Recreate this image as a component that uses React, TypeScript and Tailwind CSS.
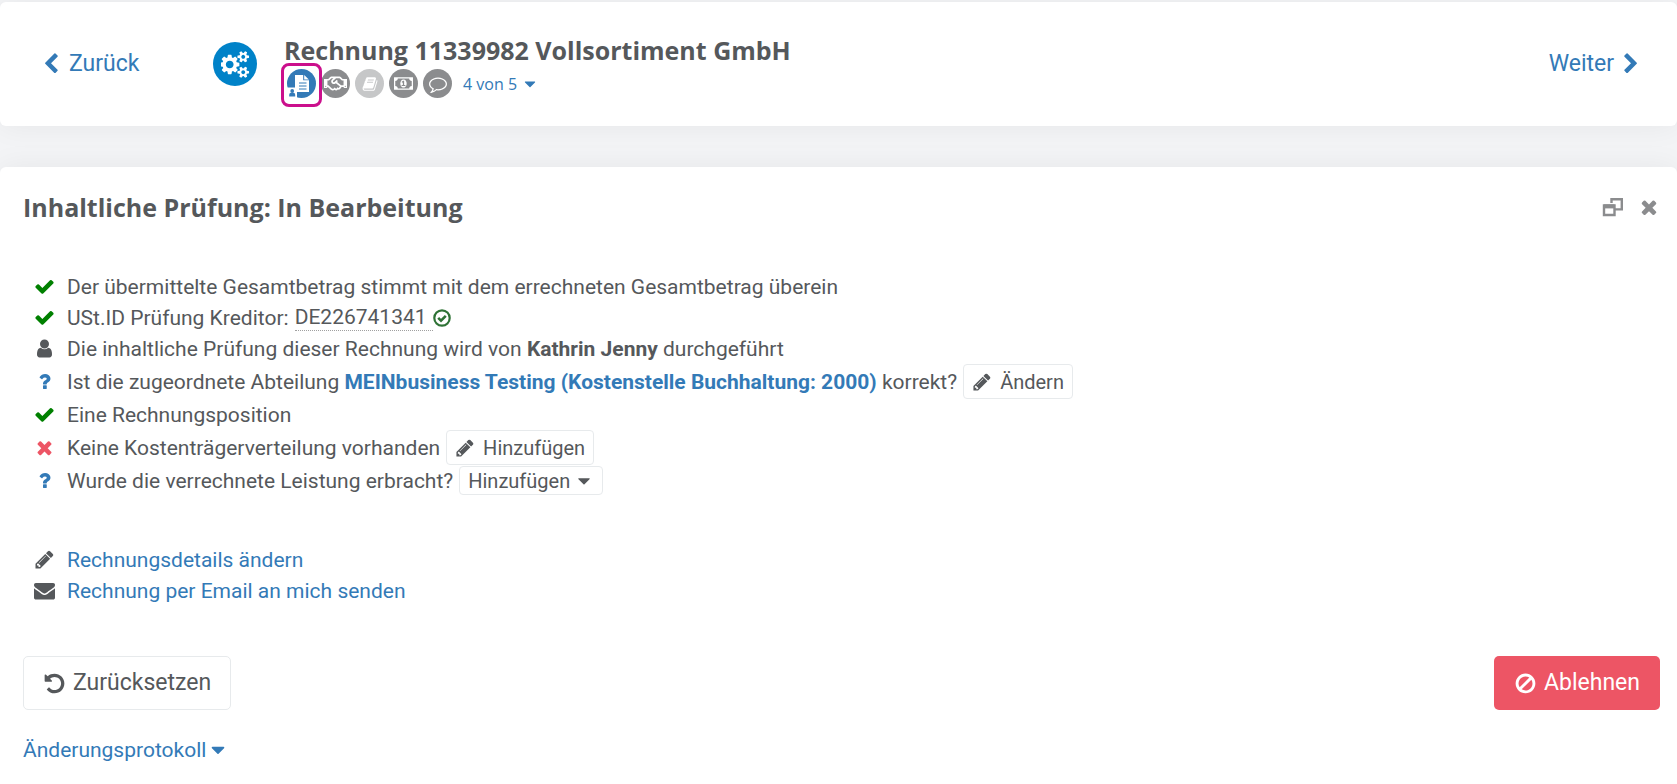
import type { ReactNode } from 'react';
import { FaRegHandshake } from 'react-icons/fa';

const paths = {
  check:
    'M1671 566q0 40-28 68l-724 724-136 136q-28 28-68 28t-68-28l-136-136-362-362q-28-28-28-68t28-68l136-136q28-28 68-28t68 28l294 295 656-657q28-28 68-28t68 28l136 136q28 28 28 68z',
  times:
    'M1490 1322q0 40-28 68l-136 136q-28 28-68 28t-68-28l-294-294-294 294q-28 28-68 28t-68-28l-136-136q-28-28-28-68t28-68l294-294-294-294q-28-28-28-68t28-68l136-136q28-28 68-28t68 28l294 294 294-294q28-28 68-28t68 28l136 136q28 28 28 68t-28 68l-294 294 294 294q28 28 28 68z',
  user:
    'M1536 1399q0 109-62.5 187t-150.5 78h-854q-88 0-150.5-78t-62.5-187q0-85 8.5-160.5t31.5-152 58.5-131 94-89 134.5-34.5q131 128 313 128t313-128q76 0 134.5 34.5t94 89 58.5 131 31.5 152 8.5 160.5zm-256-887q0 159-112.5 271.5t-271.5 112.5-271.5-112.5-112.5-271.5 112.5-271.5 271.5-112.5 271.5 112.5 112.5 271.5z',
  question:
    'M1088 1256v240q0 16-12 28t-28 12h-240q-16 0-28-12t-12-28v-240q0-16 12-28t28-12h240q16 0 28 12t12 28zm316-600q0 54-15.5 101t-35 76.5-55 59.5-57.5 43.5-61 35.5q-41 23-68.5 65t-27.5 67q0 17-12 32.5t-28 15.5h-240q-15 0-25.5-18.5t-10.5-37.5v-45q0-83 65-156.5t143-108.5q59-27 84-56t25-76q0-42-46.5-74t-107.5-32q-65 0-108 29-35 25-107 115-13 16-31 16-12 0-25-8l-164-125q-13-10-15.5-25t5.5-28q160-266 464-266 80 0 161 31t146 83 106 127.5 41 158.5z',
  pencil:
    'M491 1536l91-91-235-235-91 91v107h128v128h107zm523-928q0-22-22-22-10 0-17 7l-542 542q-7 7-7 17 0 22 22 22 10 0 17-7l542-542q7-7 7-17zm-54-192l416 416-832 832h-416v-416zm683 96q0 53-37 90l-166 166-416-416 166-165q36-38 90-38 53 0 91 38l235 234q37 39 37 91z',
  envelope:
    'M1792 710v794q0 66-47 113t-113 47h-1472q-66 0-113-47t-47-113v-794q44 49 101 87 362 246 497 345 57 42 92.5 65.5t94.5 48 110 24.5h2q51 0 110-24.5t94.5-48 92.5-65.5q170-123 498-345 57-39 100-87zm0-294q0 79-49 151t-122 123q-376 261-468 325-10 7-42.5 31t-54 38.5-52 32.5-57.5 27-50 9h-2q-23 0-50-9t-57.5-27-52-32.5-54-38.5-42.5-31q-91-64-262-182.5t-205-142.5q-62-42-117-115.5t-55-136.5q0-78 41.5-130t118.5-52h1472q65 0 112.5 47t47.5 113z',
  undo:
    'M1664 896q0 156-61 298t-164 245-245 164-298 61q-172 0-327-72.5t-264-204.5q-7-10-6.5-22.5t8.5-20.5l137-138q10-9 25-9 16 2 23 12 73 95 179 147t225 52q104 0 198.5-40.5t163.5-109.5 109.5-163.5 40.5-198.5-40.5-198.5-109.5-163.5-163.5-109.5-198.5-40.5q-98 0-188 35.5t-160 101.5l137 138q31 30 14 69-17 40-59 40h-448q-26 0-45-19t-19-45v-448q0-42 40-59 39-17 69 14l130 129q107-101 244.5-156.5t284.5-55.5q156 0 298 61t245 164 164 245 61 298z',
  ban:
    'M1440 893q0-161-87-295l-754 753q137 89 297 89 111 0 211.5-43.5t173.5-116.5 116-174.5 43-212.5zm-999 299l755-754q-135-91-300-91-148 0-273 73t-198 199-73 274q0 162 89 299zm1223-299q0 157-61 300t-163.5 246-245 164-298.5 61-298.5-61-245-164-163.5-246-61-300 61-299.5 163.5-245.5 245-164 298.5-61 298.5 61 245 164 163.5 245.5 61 299.5z',
  caret: 'M1408 704q0 26-19 45l-448 448q-19 19-45 19t-45-19l-448-448q-19-19-19-45t19-45 45-19h896q26 0 45 19t19 45z',
  chevronLeft:
    'M1427 301l-531 531 531 531q19 19 19 45t-19 45l-166 166q-19 19-45 19t-45-19l-742-742q-19-19-19-45t19-45l742-742q19-19 45-19t45 19l166 166q19 19 19 45t-19 45z',
  chevronRight:
    'M1363 877l-742 742q-19 19-45 19t-45-19l-166-166q-19-19-19-45t19-45l531-531-531-531q-19-19-19-45t19-45l166-166q19-19 45-19t45 19l742 742q19 19 19 45t-19 45z',
  comment:
    'M896 384q-204 0-381.5 69.5t-282 187.5-104.5 255q0 112 71.5 213.5t201.5 175.5l87 50-27 96q-24 91-70 172 152-63 275-171l43-38 57 6q69 8 130 8 204 0 381.5-69.5t282-187.5 104.5-255-104.5-255-282-187.5-381.5-69.5zm896 512q0 174-120 321.5t-326 233-450 85.5q-70 0-145-8-198 175-460 242-49 14-114 22h-5q-15 0-27-10.5t-16-27.5v-1q-3-4-.5-12t2-10 4.5-9.5l6-9 7-8.5 8-9q7-8 31-34.5t34.5-38 31-39.5 32.5-51 27-59 26-76q-157-89-247.5-220t-90.5-281q0-174 120-321.5t326-233 450-85.5 450 85.5 326 233 120 321.5z',
  book:
    'M1703 478q40 57 18 129l-275 906q-19 64-76.5 107.5t-122.5 43.5h-923q-77 0-148.5-53.5t-99.5-131.5q-24-67-2-127 0-4 3-27t4-37q1-8-3-21.5t-3-19.5q2-11 8-21t16.5-23.5 16.5-23.5q23-38 45-91.5t30-91.5q3-10 .5-30t-.5-28q3-11 17-28t17-23q21-36 42-92t25-90q1-9-2.5-32t.5-28q4-13 22-30.5t22-22.5q19-26 42.5-84.5t27.5-96.5q1-8-3-25.5t-2-26.5q2-8 9-18t18-23 17-21q8-12 16.5-30.5t15-35 16-36 19.5-32 26.5-23.5 36-11.5 47.5 5.5l-1 3q38-9 51-9h761q74 0 114 56t18 130l-274 906q-36 119-71.5 153.5t-128.5 34.5h-869q-27 0-38 15-11 16-1 43 24 70 144 70h923q29 0 56-15.5t35-41.5l300-987q7-22 5-57 38 15 59 43zm-1064 2q-4 13 2 22.5t20 9.5h608q13 0 25.5-9.5t16.5-22.5l21-64q4-13-2-22.5t-20-9.5h-608q-13 0-25.5 9.5t-16.5 22.5zm-83 256q-4 13 2 22.5t20 9.5h608q13 0 25.5-9.5t16.5-22.5l21-64q4-13-2-22.5t-20-9.5h-608q-13 0-25.5 9.5t-16.5 22.5z',
  money:
    'M768 1152h384v-96h-128v-448h-114l-148 137 77 80q42-37 55-57h2v288h-128v96zm512-256q0 70-21 142t-59.5 134-101.5 101-138 39-138-39-101.5-101-59.5-134-21-142 21-142 59.5-134 101.5-101 138-39 138 39 101.5 101 59.5 134 21 142zm512 256v-512q-106 0-181-75t-75-181h-1152q0 106-75 181t-181 75v512q106 0 181 75t75 181h1152q0-106 75-181t181-75zm128-832v1152q0 26-19 45t-45 19h-1792q-26 0-45-19t-19-45v-1152q0-26 19-45t45-19h1792q26 0 45 19t19 45z',
  cogs:
    'M832 896q0-106-75-181t-181-75-181 75-75 181 75 181 181 75 181-75 75-181zm768 512q0-52-38-90t-90-38-90 38-38 90q0 53 37.5 90.5t90.5 37.5 90.5-37.5 37.5-90.5zm0-1024q0-52-38-90t-90-38-90 38-38 90q0 53 37.5 90.5t90.5 37.5 90.5-37.5 37.5-90.5zm-384 421v185q0 10-7 19.5t-16 10.5l-155 24q-11 35-32 76 34 48 90 115 7 11 7 20 0 12-7 19-23 30-82.5 89.5t-78.5 59.5q-11 0-21-7l-115-90q-37 19-77 31-11 108-23 155-7 24-30 24h-186q-11 0-20-7.5t-10-17.5l-23-153q-34-10-75-31l-118 89q-7 7-20 7-11 0-21-8-144-133-144-160 0-9 7-19 10-14 41-53t47-61q-23-44-35-82l-152-24q-10-1-17-9.5t-7-19.5v-185q0-10 7-19.5t16-10.5l155-24q11-35 32-76-34-48-90-115-7-11-7-20 0-12 7-20 22-30 82-89t79-59q11 0 21 7l115 90q34-18 77-32 11-108 23-154 7-24 30-24h186q11 0 20 7.5t10 17.5l23 153q34 10 75 31l118-89q8-7 20-7 11 0 21 8 144 133 144 160 0 8-7 19-12 16-42 54t-45 60q23 48 34 82l152 23q10 2 17 10.5t7 19.5zm640 533v140q0 16-149 31-12 27-30 52 51 113 51 138 0 4-4 7-122 71-124 71-8 0-46-47t-52-68q-20 2-30 2t-30-2q-14 21-52 68t-46 47q-2 0-124-71-4-3-4-7 0-25 51-138-18-25-30-52-149-15-149-31v-140q0-16 149-31 13-29 30-52-51-113-51-138 0-4 4-7 4-2 35-20t59-34 30-16q8 0 46 46.5t52 67.5q20-2 30-2t30 2q51-71 92-112l6-2q4 0 124 70 4 3 4 7 0 25-51 138 17 23 30 52 149 15 149 31zm0-1024v140q0 16-149 31-12 27-30 52 51 113 51 138 0 4-4 7-122 71-124 71-8 0-46-47t-52-68q-20 2-30 2t-30-2q-14 21-52 68t-46 47q-2 0-124-71-4-3-4-7 0-25 51-138-18-25-30-52-149-15-149-31v-140q0-16 149-31 13-29 30-52-51-113-51-138 0-4 4-7 4-2 35-20t59-34 30-16q8 0 46 46.5t52 67.5q20-2 30-2t30 2q51-71 92-112l6-2q4 0 124 70 4 3 4 7 0 25-51 138 17 23 30 52 149 15 149 31z',
};

interface IconProps {
  name: keyof typeof paths;
  className?: string;
  wide?: boolean;
}

function Icon({ name, className = 'size-5', wide }: IconProps) {
  return (
    <svg
      viewBox={wide ? '0 0 1920 1792' : '0 0 1792 1792'}
      fill="currentColor"
      aria-hidden="true"
      className={`shrink-0 ${className}`}
    >
      <path d={paths[name]} />
    </svg>
  );
}

function DocumentUserIcon() {
  return (
    <svg viewBox="0 0 29 29" aria-hidden="true" className="size-[29px]">
      <circle cx="14.5" cy="14.5" r="14.5" fill="#337ab7" />
      <path d="M8 6h8.2v5.3h5.8V23H8z" fill="#fff" />
      <path d="M17.2 6l4.6 4.4h-4.6z" fill="#fff" />
      <path d="M12 14h7.5M12 17h7.5M12 20h7.5" stroke="#337ab7" strokeWidth="1" />
      <path d="M0 18.5h10V29H0z" fill="#fff" />
      <circle cx="5.2" cy="22" r="1.9" fill="#337ab7" />
      <path d="M2.2 27.5v-1.8q0-1.9 1.9-1.9h2.2q1.9 0 1.9 1.9v1.8z" fill="#337ab7" />
    </svg>
  );
}

function StepButton({ label, className, children }: { label: string; className: string; children: ReactNode }) {
  return (
    <button
      type="button"
      aria-label={label}
      className={`flex size-[29px] shrink-0 items-center justify-center rounded-full text-white ${className}`}
    >
      {children}
    </button>
  );
}

function Row({ icon, children }: { icon: ReactNode; children: ReactNode }) {
  return (
    <li className="flex min-h-[31px] items-center gap-3">
      <span className="flex w-[22px] shrink-0 justify-center">{icon}</span>
      <div className="flex flex-wrap items-center gap-[6px]">{children}</div>
    </li>
  );
}

const smallButton = 'flex items-center rounded-[4px] border border-[#e7eaec] bg-white px-2 text-xl leading-6';

export default function App() {
  return (
    <div className="min-h-screen bg-[#f3f4f6] pt-[2px] font-[Roboto,sans-serif] text-[21px] leading-7 text-[#55585b]">
      <header className="flex h-[124px] items-center rounded-md bg-white pr-[35px] pl-10 shadow-[0_0_30px_rgba(0,0,0,0.06)]">
        <a href="#zurueck" className="flex w-[173px] items-center gap-[7px] text-[23px] text-[#337ab7]">
          <Icon name="chevronLeft" className="size-[22px]" />
          Zurück
        </a>
        <span className="flex size-11 items-center justify-center rounded-full bg-[#0082c8] text-white">
          <Icon name="cogs" wide className="size-[29px]" />
        </span>
        <div className="ml-[27px] pt-1">
          <h1 className="font-['Open_Sans',sans-serif] text-[25px] leading-8 font-bold">
            Rechnung 11339982 Vollsortiment GmbH
          </h1>
          <div className="flex items-center gap-[5px] pt-[3px] pl-[3px]">
            <button type="button" aria-label="Inhaltliche Prüfung" className="relative">
              <DocumentUserIcon />
              <span className="absolute -inset-x-[6px] -top-[6px] -bottom-[9px] rounded-lg border-[3px] border-[#cb0f8c]" />
            </button>
            <StepButton label="Freigabe" className="bg-[#8b8c8e]">
              <FaRegHandshake className="size-[23px]" />
            </StepButton>
            <StepButton label="Buchung" className="bg-[#c6c7c8]">
              <Icon name="book" className="size-4" />
            </StepButton>
            <StepButton label="Zahlung" className="bg-[#8b8c8e]">
              <Icon name="money" wide className="size-[19px]" />
            </StepButton>
            <StepButton label="Kommentare" className="bg-[#8b8c8e]">
              <Icon name="comment" className="size-[18px]" />
            </StepButton>
            <button
              type="button"
              className="ml-[6px] flex items-center gap-1 font-['Open_Sans',sans-serif] text-base text-[#337ab7]"
            >
              4 von 5
              <Icon name="caret" className="size-[18px]" />
            </button>
          </div>
        </div>
        <a href="#weiter" className="ml-auto flex items-center gap-[6px] text-[23px] text-[#337ab7]">
          Weiter
          <Icon name="chevronRight" className="size-[22px]" />
        </a>
      </header>

      <main className="mt-[41px] min-h-[617px] rounded-t-md bg-white pt-6 pr-[17px] pb-5 pl-[23px] shadow-[0_0_30px_rgba(0,0,0,0.06)]">
        <div className="flex items-center justify-between">
          <h2 className="font-['Open_Sans',sans-serif] text-[25px] leading-8 font-bold">
            Inhaltliche Prüfung: In Bearbeitung
          </h2>
          <div className="flex items-center gap-[14px] text-[#8b8c8e]">
            <button type="button" aria-label="Fenster wiederherstellen">
              <svg viewBox="0 0 22 20" aria-hidden="true" className="h-5 w-[22px]">
                <path d="M9.5 6V2.2h10.3v10.2h-7" fill="none" stroke="currentColor" strokeWidth="2.4" />
                <path d="M2 8.5h10.5V18H2z" fill="none" stroke="currentColor" strokeWidth="2.4" />
                <path d="M2 7.4h10.5v4H2z" fill="currentColor" />
              </svg>
            </button>
            <button type="button" aria-label="Schließen">
              <Icon name="times" className="size-[22px]" />
            </button>
          </div>
        </div>

        <ul className="mt-12 pl-[10px]">
          <Row icon={<Icon name="check" className="size-[21px] text-[#008000]" />}>
            Der übermittelte Gesamtbetrag stimmt mit dem errechneten Gesamtbetrag überein
          </Row>
          <Row icon={<Icon name="check" className="size-[21px] text-[#008000]" />}>
            USt.ID Prüfung Kreditor:
            <span className="flex items-center">
              <span className="border-b border-dotted border-[#a0a0a0] pr-[6px] leading-[26px]">DE226741341</span>
              <svg viewBox="0 0 18 18" fill="none" stroke="#2f7336" aria-hidden="true" className="size-[18px]">
                <circle cx="9" cy="9" r="7.7" strokeWidth="2.2" />
                <path d="M5.2 8.8l2.8 2.8 4.8-4.8" strokeWidth="2.6" />
              </svg>
            </span>
          </Row>
          <Row icon={<Icon name="user" className="size-[21px]" />}>
            <span>
              Die inhaltliche Prüfung dieser Rechnung wird von <strong>Kathrin Jenny</strong> durchgeführt
            </span>
          </Row>
          <Row icon={<Icon name="question" className="size-[21px] text-[#337ab7]" />}>
            <span>
              Ist die zugeordnete Abteilung{' '}
              <a href="#abteilung" className="font-bold text-[#337ab7]">
                MEINbusiness Testing (Kostenstelle Buchhaltung: 2000)
              </a>{' '}
              korrekt?
            </span>
            <button type="button" className={`${smallButton} h-[35px] gap-2`}>
              <Icon name="pencil" />
              Ändern
            </button>
          </Row>
          <Row icon={<Icon name="check" className="size-[21px] text-[#008000]" />}>Eine Rechnungsposition</Row>
          <Row icon={<Icon name="times" className="size-[21px] text-[#ed5565]" />}>
            Keine Kostenträgerverteilung vorhanden
            <button type="button" className={`${smallButton} h-[35px] gap-2`}>
              <Icon name="pencil" />
              Hinzufügen
            </button>
          </Row>
          <Row icon={<Icon name="question" className="size-[21px] text-[#337ab7]" />}>
            Wurde die verrechnete Leistung erbracht?
            <button type="button" className={`${smallButton} h-[29px] gap-1`}>
              Hinzufügen
              <Icon name="caret" />
            </button>
          </Row>
        </ul>

        <ul className="mt-12 pl-[10px]">
          <Row icon={<Icon name="pencil" className="size-[21px]" />}>
            <a href="#details" className="text-[#337ab7]">
              Rechnungsdetails ändern
            </a>
          </Row>
          <Row icon={<Icon name="envelope" className="size-[21px]" />}>
            <a href="#email" className="text-[#337ab7]">
              Rechnung per Email an mich senden
            </a>
          </Row>
        </ul>

        <div className="mt-[50px] flex items-center justify-between text-[23px]">
          <button type="button" className="flex h-[54px] items-center gap-[7px] rounded-[5px] border border-[#e7eaec] px-[19px]">
            <Icon name="undo" className="size-[23px]" />
            Zurücksetzen
          </button>
          <button type="button" className="flex h-[54px] items-center gap-[7px] rounded-[5px] bg-[#ed5565] px-5 text-white">
            <Icon name="ban" className="size-[23px]" />
            Ablehnen
          </button>
        </div>
        <button type="button" className="mt-[26px] flex items-center gap-px text-[#337ab7]">
          Änderungsprotokoll
          <Icon name="caret" className="size-[22px]" />
        </button>
      </main>
    </div>
  );
}
